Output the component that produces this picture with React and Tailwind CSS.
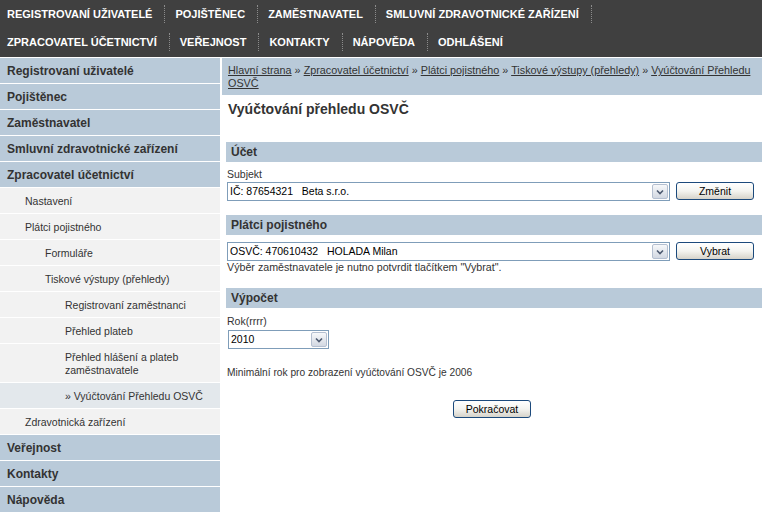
const topRow1 = [
  "REGISTROVANÍ UŽIVATELÉ",
  "POJIŠTĚNEC",
  "ZAMĚSTNAVATEL",
  "SMLUVNÍ ZDRAVOTNICKÉ ZAŘÍZENÍ",
];
const topRow2 = ["ZPRACOVATEL ÚČETNICTVÍ", "VEŘEJNOST", "KONTAKTY", "NÁPOVĚDA", "ODHLÁŠENÍ"];

const sideItems = [
  { label: "Registrovaní uživatelé", level: 0 },
  { label: "Pojištěnec", level: 0 },
  { label: "Zaměstnavatel", level: 0 },
  { label: "Smluvní zdravotnické zařízení", level: 0 },
  { label: "Zpracovatel účetnictví", level: 0 },
  { label: "Nastavení", level: 1 },
  { label: "Plátci pojistného", level: 1 },
  { label: "Formuláře", level: 2 },
  { label: "Tiskové výstupy (přehledy)", level: 2 },
  { label: "Registrovaní zaměstnanci", level: 3 },
  { label: "Přehled plateb", level: 3 },
  { label: "Přehled hlášení a plateb zaměstnavatele", level: 3 },
  { label: "» Vyúčtování Přehledu OSVČ", level: 3, active: true },
  { label: "Zdravotnická zařízení", level: 1 },
  { label: "Veřejnost", level: 0 },
  { label: "Kontakty", level: 0 },
  { label: "Nápověda", level: 0 },
];

const levelClass = {
  0: "pl-[7px] font-bold text-[12px] bg-[#b9cad9]",
  1: "pl-[25px] text-[10.5px] bg-[#f2f2f2]",
  2: "pl-[45px] text-[10.5px] bg-[#f2f2f2]",
  3: "pl-[65px] text-[10.5px] bg-[#f2f2f2]",
};

const crumbs = [
  "Hlavní strana",
  "Zpracovatel účetnictví",
  "Plátci pojistného",
  "Tiskové výstupy (přehledy)",
  "Vyúčtování Přehledu OSVČ",
];

const TopRow = ({ items, lastSep }) => (
  <div className="flex items-center h-[28px]">
    {items.map((item, i) => (
      <div key={item} className="flex items-center">
        <span className={`${i === 0 ? "pl-[7px]" : "pl-[10px]"} pr-[12px]`}>{item}</span>
        {(i < items.length - 1 || lastSep) && (
          <span className="h-[18px] border-r border-dotted border-[#8c8c8c]" />
        )}
      </div>
    ))}
  </div>
);

const Select = ({ value, className }) => (
  <div className={`flex h-[19px] border border-[#7f9db9] bg-white ${className}`}>
    <div className="flex-1 pl-[2px] leading-[17px] text-[10.5px] text-black truncate whitespace-pre">
      {value}
    </div>
    <div className="w-[16px] m-[1px] flex items-center justify-center border border-[#b4bfd0] rounded-[2px] bg-gradient-to-b from-[#f7f8fa] to-[#d2d8e2]">
      <svg width="8" height="6" viewBox="0 0 8 6">
        <path d="M1 1.5 L4 4.5 L7 1.5" fill="none" stroke="#4d5a70" strokeWidth="1.6" />
      </svg>
    </div>
  </div>
);

const Button = ({ children, className = "" }) => (
  <button
    className={`h-[18px] w-[78px] border border-[#1c4a7c] rounded-[3px] bg-gradient-to-b from-[#ffffff] via-[#f4f4f0] to-[#d6d3ca] text-[10.5px] text-black leading-[16px] ${className}`}
  >
    {children}
  </button>
);

const SectionHeader = ({ children, className = "" }) => (
  <div className={`h-[20px] flex items-center pl-[5px] bg-[#b9cad9] font-bold text-[12px] ${className}`}>
    {children}
  </div>
);

export default function App() {
  return (
    <div
      className="w-[762px] h-[514px] overflow-hidden bg-white text-[#333]"
      style={{ fontFamily: "'Liberation Sans', Arial, sans-serif" }}
    >
      <div className="h-[57px] bg-[#404040] text-white font-bold text-[11px]">
        <TopRow items={topRow1} lastSep />
        <TopRow items={topRow2} />
      </div>
      <div className="flex gap-[2px] pt-[1px]">
        <aside className="w-[220px] shrink-0 flex flex-col">
          {sideItems.map((item) => (
            <div
              key={item.label}
              className={`${levelClass[item.level]} ${item.active ? "!bg-[#e3e8ec]" : ""} border-b border-white pt-[7px] pb-[5px] pr-[8px] leading-[13px]`}
            >
              {item.label}
            </div>
          ))}
        </aside>
        <main className="flex-1 min-w-0">
          <div className="bg-[#b9cad9] pl-[6px] pr-[6px] pt-[6px] pb-[5px] text-[10.8px] leading-[13px]">
            {crumbs.map((c, i) => (
              <span key={c}>
                {i > 0 && " » "}
                <a className="underline">{c}</a>
              </span>
            ))}
          </div>
          <h1 className="h-[47px] pl-[6px] pt-[6px] text-[14px] leading-[17px] font-bold">
            Vyúčtování přehledu OSVČ
          </h1>
          <div className="pl-[4px] text-[10.5px]">
            <SectionHeader>Účet</SectionHeader>
            <div className="pl-[1px] pr-[8px]">
              <div className="mt-[6px] leading-[13px]">Subjekt</div>
              <div className="mt-[1px] flex gap-[6px]">
                <Select className="flex-1" value="IČ: 87654321   Beta s.r.o." />
                <Button>Změnit</Button>
              </div>
            </div>

            <SectionHeader className="mt-[14px]">Plátci pojistného</SectionHeader>
            <div className="pl-[1px] pr-[8px]">
              <div className="mt-[7px] flex gap-[6px]">
                <Select className="flex-1" value="OSVČ: 470610432   HOLADA Milan" />
                <Button>Vybrat</Button>
              </div>
              <div className="leading-[13px] text-[10.7px]">Výběr zaměstnavatele je nutno potvrdit tlačítkem "Vybrat".</div>
            </div>

            <SectionHeader className="mt-[14px]">Výpočet</SectionHeader>
            <div className="pl-[1px] pr-[8px]">
              <div className="mt-[7px] leading-[13px]">Rok(rrrr)</div>
              <Select className="mt-[2px] ml-[1px] w-[101px]" value="2010" />
              <div className="mt-[17px] leading-[13px] text-[10.2px]">Minimální rok pro zobrazení vyúčtování OSVČ je 2006</div>
              <div className="mt-[21px] flex justify-center">
                <Button className="ml-[3px]">Pokračovat</Button>
              </div>
            </div>
          </div>
        </main>
      </div>
    </div>
  );
}
